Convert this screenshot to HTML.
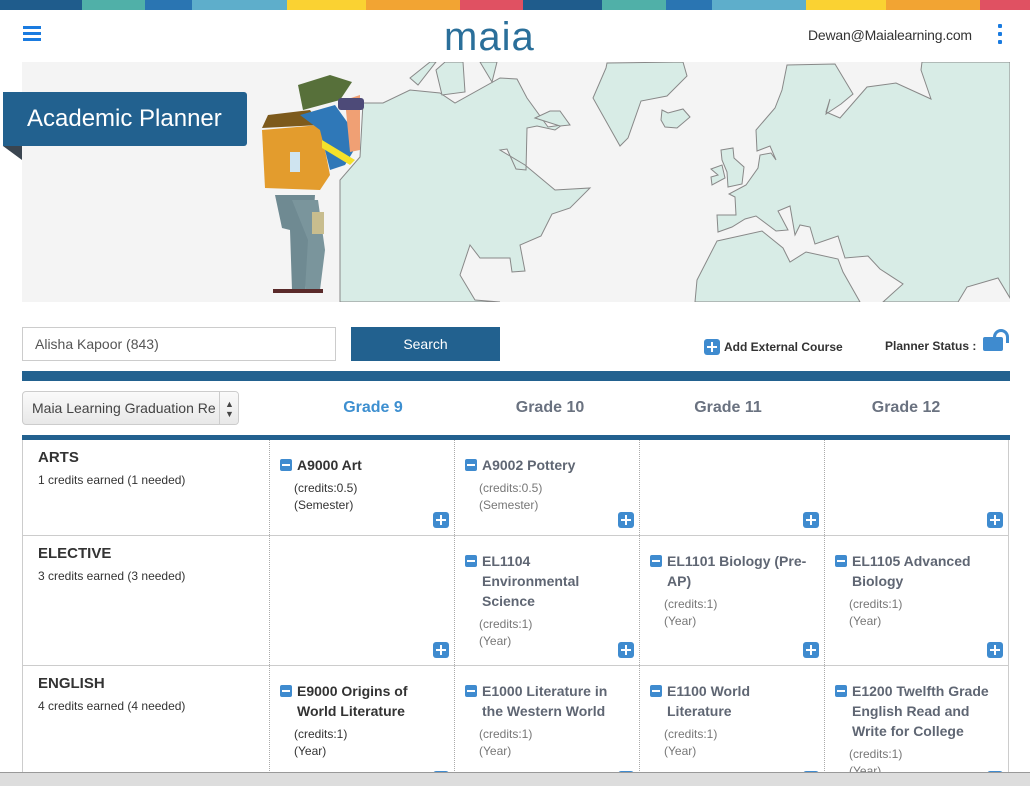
<!DOCTYPE html>
<html><head><meta charset="utf-8">
<style>
*{margin:0;padding:0;box-sizing:border-box}
body{width:1030px;height:786px;overflow:hidden;background:#fff;font-family:"Liberation Sans",sans-serif;position:relative;color:#333}
.a{position:absolute}
.t{font-weight:bold;font-size:14px;line-height:20px;color:#5f6673}
.t.d{color:#333}
.s{font-size:12px;line-height:17px;color:#777}
.s.d{color:#333}
.mi{position:absolute;left:-17px;top:4px;width:12px;height:12px;background:#3f8bcf;border-radius:2px}
.mi:after{content:"";position:absolute;left:2px;top:5px;width:8px;height:2px;background:#fff}
.pl{position:absolute;width:16px;height:16px;background:#3f8bcf;border-radius:3px}
.pl:before{content:"";position:absolute;left:3px;top:7px;width:10px;height:2px;background:#fff}
.pl:after{content:"";position:absolute;left:7px;top:3px;width:2px;height:10px;background:#fff}
.g{position:absolute;top:399px;font-size:16px;font-weight:bold;color:#6a7280;width:160px;text-align:center}
.vl{position:absolute;top:0;height:333px;border-left:1px dotted #aaa}
.hl{position:absolute;left:0;width:987px;border-top:1px solid #ccc}
.cat{font-weight:bold;font-size:15px;color:#333}
.ce{font-size:12px;color:#333}
#tb{position:absolute;left:22px;top:440px;width:988px;height:332px;overflow:hidden}
</style></head><body>
<div class="a" style="left:0;top:0;width:1030px;height:10px;display:flex">
<div style="width:82px;background:#1f5c8c"></div><div style="width:63px;background:#50b0a8"></div><div style="width:47px;background:#2a75b2"></div><div style="width:95px;background:#5eaecb"></div><div style="width:79px;background:#fad232"></div><div style="width:94px;background:#f2a433"></div><div style="width:63px;background:#e05162"></div><div style="width:79px;background:#1f5c8c"></div><div style="width:64px;background:#50b0a8"></div><div style="width:46px;background:#2a75b2"></div><div style="width:94px;background:#5eaecb"></div><div style="width:80px;background:#fad232"></div><div style="width:94px;background:#f2a433"></div><div style="width:50px;background:#e05162"></div>
</div>
<div class="a" style="left:23px;top:26px;width:18px;height:3px;background:#1a7be0;box-shadow:0 6px 0 #1a7be0,0 12px 0 #1a7be0"></div>
<div class="a" style="left:444px;top:12px;font-size:40px;color:#2a6f9a;letter-spacing:1px;line-height:50px">maia</div>
<div class="a" style="left:808px;top:27px;font-size:14px;color:#333;letter-spacing:-0.2px">Dewan@Maialearning.com</div>
<div class="a" style="left:998px;top:24px;width:4px;height:4px;background:#1a7be0;border-radius:1px;box-shadow:0 8px 0 #1a7be0,0 16px 0 #1a7be0"></div>
<div class="a" style="left:22px;top:62px;width:988px;height:240px;background:#f4f4f4;overflow:hidden">
<svg width="988" height="240" viewBox="22 62 988 240" style="position:absolute;left:0;top:0">
<g fill="#d8ece6" stroke="#888" stroke-width="1">
<polygon points="363,103 383,103 410,90 440,93 455,103 500,78 517,79 527,98 548,127 562,125 555,130 537,126 527,128 526,170 516,169 507,149 500,150 525,165 555,190 590,188 570,208 552,214 541,236 520,245 525,271 512,272 510,258 480,258 470,245 460,275 475,300 500,302 340,302 340,180 360,157"/>
<polygon points="410,78 430,62 436,62 418,85"/>
<polygon points="436,70 445,62 463,62 465,92 442,95"/>
<polygon points="480,62 497,62 492,82"/>
<polygon points="535,118 550,111 560,111 570,125 560,126"/>
<polygon points="607,63 606,68 593,98 620,146 628,138 641,101 667,96 687,76 683,62"/>
<polygon points="662,110 668,113 683,109 690,117 677,128 665,127 661,120"/>
<polygon points="787,65 835,64 853,94 841,104 826,114 830,99 826,112 840,118 867,87 896,83 931,99 921,70 922,62 1010,62 1010,298 998,278 967,287 958,302 883,302 903,284 880,269 868,256 845,258 838,236 815,244 810,227 800,225 795,235 790,206 778,211 788,230 776,231 756,216 745,219 732,227 718,232 717,215 736,215 735,197 729,194 746,185 758,168 760,155 771,153 776,160 770,146 757,151 756,130 775,108 782,90"/>
<polygon points="721,150 733,148 734,158 744,167 742,184 728,187 727,172 722,160"/>
<polygon points="711,169 722,165 725,178 712,185 711,177 718,175"/>
<polygon points="717,241 762,231 783,248 790,262 806,252 838,259 843,272 860,302 695,302 697,280"/>
</g>
<g>
<polygon points="275,195 315,195 313,225 305,290 292,290 290,230 282,228" fill="#6f8a92"/>
<polygon points="292,200 318,200 325,250 320,290 305,290 308,240" fill="#7a959c"/>
<rect x="273" y="289" width="50" height="4" fill="#5a2a2a"/>
<polygon points="262,130 320,125 330,175 320,190 265,188" fill="#e39c2d"/>
<polygon points="262,128 320,125 310,110 268,115" fill="#7d5a1c"/>
<rect x="290" y="152" width="10" height="20" fill="#cfe4f0"/>
<polygon points="300,115 335,105 360,140 345,165 330,170 320,130" fill="#2f78b8"/>
<polygon points="322,140 355,160 350,165 322,148" fill="#f4e12a"/>
<polygon points="345,100 360,95 360,150 350,152" fill="#f0a074"/>
<polygon points="298,85 330,75 352,82 340,100 303,110" fill="#57703a"/>
<rect x="338" y="98" width="26" height="12" rx="3" fill="#4d4a78"/>
<rect x="312" y="212" width="12" height="22" fill="#c8bd8e"/>
</g>
</svg>
</div>
<div class="a" style="left:3px;top:146px;width:0;height:0;border-left:19px solid transparent;border-top:14px solid #3a4550"></div>
<div class="a" style="left:3px;top:92px;width:244px;height:54px;background:#22618f;border-radius:0 3px 3px 0;color:#fff;font-size:24px;line-height:54px;padding-left:24px">Academic Planner</div>
<div class="a" style="left:22px;top:327px;width:314px;height:34px;border:1px solid #ccc;font-size:14px;line-height:32px;padding-left:12px;color:#555">Alisha Kapoor (843)</div>
<div class="a" style="left:351px;top:327px;width:149px;height:34px;background:#22618f;color:#fff;font-size:14px;line-height:34px;text-align:center">Search</div>
<div class="pl" style="left:704px;top:339px"></div>
<div class="a" style="left:724px;top:340px;font-size:12px;font-weight:bold;color:#333">Add External Course</div>
<div class="a" style="left:885px;top:339px;font-size:12px;font-weight:bold;color:#333">Planner Status :</div>
<div class="a" style="left:983px;top:337px;width:20px;height:14px;background:#3f8bcf;border-radius:2px"></div>
<div class="a" style="left:993px;top:329px;width:16px;height:14px;border:3px solid #3f8bcf;border-bottom:none;border-radius:8px 8px 0 0"></div>
<div class="a" style="left:22px;top:371px;width:988px;height:10px;background:#22618f"></div>
<div class="a" style="left:22px;top:391px;width:217px;height:34px;border:1px solid #ccc;border-radius:4px;background:linear-gradient(#fafafa,#e8e8e8);font-size:14px;line-height:32px;padding-left:9px;color:#444;overflow:hidden;white-space:nowrap">Maia Learning Graduation Re<span style="position:absolute;left:196px;top:0;height:32px;width:20px;border-left:1px solid #ccc;background:linear-gradient(#fafafa,#e8e8e8);font-size:9px;text-align:center;line-height:10px;padding-top:7px">▲<br>▼</span></div>
<div class="g" style="left:293px;color:#3d8fd0">Grade 9</div>
<div class="g" style="left:470px">Grade 10</div>
<div class="g" style="left:648px">Grade 11</div>
<div class="g" style="left:826px">Grade 12</div>
<div class="a" style="left:22px;top:435px;width:988px;height:5px;background:#22618f"></div>
<div id="tb">
<div class="a" style="left:0;top:0;height:333px;border-left:1px solid #ccc"></div>
<div class="a" style="left:986px;top:0;height:333px;border-left:1px solid #ccc"></div>
<div class="vl" style="left:247px"></div><div class="vl" style="left:432px"></div><div class="vl" style="left:617px"></div><div class="vl" style="left:802px"></div>
<div class="hl" style="top:95px"></div><div class="hl" style="top:225px"></div>
<div class="a" style="left:16px;top:9px"><div class="cat">ARTS</div><div class="ce" style="margin-top:7px">1 credits earned (1 needed)</div></div>
<div class="a" style="left:16px;top:105px"><div class="cat">ELECTIVE</div><div class="ce" style="margin-top:7px">3 credits earned (3 needed)</div></div>
<div class="a" style="left:16px;top:235px"><div class="cat">ENGLISH</div><div class="ce" style="margin-top:7px">4 credits earned (4 needed)</div></div>
<div class="a" style="left:275px;top:15px;width:150px"><div class="mi"></div><div class="t d">A9000 Art</div><div class="s d" style="margin:5px 0 0 -3px">(credits:0.5)<br>(Semester)</div></div>
<div class="a" style="left:460px;top:15px;width:150px"><div class="mi"></div><div class="t">A9002 Pottery</div><div class="s" style="margin:5px 0 0 -3px">(credits:0.5)<br>(Semester)</div></div>
<div class="a" style="left:460px;top:111px;width:150px"><div class="mi"></div><div class="t">EL1104<br>Environmental<br>Science</div><div class="s" style="margin:5px 0 0 -3px">(credits:1)<br>(Year)</div></div>
<div class="a" style="left:645px;top:111px;width:150px"><div class="mi"></div><div class="t">EL1101 Biology (Pre-<br>AP)</div><div class="s" style="margin:5px 0 0 -3px">(credits:1)<br>(Year)</div></div>
<div class="a" style="left:830px;top:111px;width:150px"><div class="mi"></div><div class="t">EL1105 Advanced<br>Biology</div><div class="s" style="margin:5px 0 0 -3px">(credits:1)<br>(Year)</div></div>
<div class="a" style="left:275px;top:241px;width:150px"><div class="mi"></div><div class="t d">E9000 Origins of<br>World Literature</div><div class="s d" style="margin:5px 0 0 -3px">(credits:1)<br>(Year)</div></div>
<div class="a" style="left:460px;top:241px;width:150px"><div class="mi"></div><div class="t">E1000 Literature in<br>the Western World</div><div class="s" style="margin:5px 0 0 -3px">(credits:1)<br>(Year)</div></div>
<div class="a" style="left:645px;top:241px;width:150px"><div class="mi"></div><div class="t">E1100 World<br>Literature</div><div class="s" style="margin:5px 0 0 -3px">(credits:1)<br>(Year)</div></div>
<div class="a" style="left:830px;top:241px;width:150px"><div class="mi"></div><div class="t">E1200 Twelfth Grade<br>English Read and<br>Write for College</div><div class="s" style="margin:5px 0 0 -3px">(credits:1)<br>(Year)</div></div>
<div class="pl" style="left:411px;top:72px"></div><div class="pl" style="left:596px;top:72px"></div><div class="pl" style="left:781px;top:72px"></div><div class="pl" style="left:965px;top:72px"></div>
<div class="pl" style="left:411px;top:202px"></div><div class="pl" style="left:596px;top:202px"></div><div class="pl" style="left:781px;top:202px"></div><div class="pl" style="left:965px;top:202px"></div>
<div class="pl" style="left:411px;top:331px"></div><div class="pl" style="left:596px;top:331px"></div><div class="pl" style="left:781px;top:331px"></div><div class="pl" style="left:965px;top:331px"></div>
</div>
<div class="a" style="left:0;top:772px;width:1030px;height:14px;background:#ddd;border-top:1px solid #999"></div>
</body></html>
